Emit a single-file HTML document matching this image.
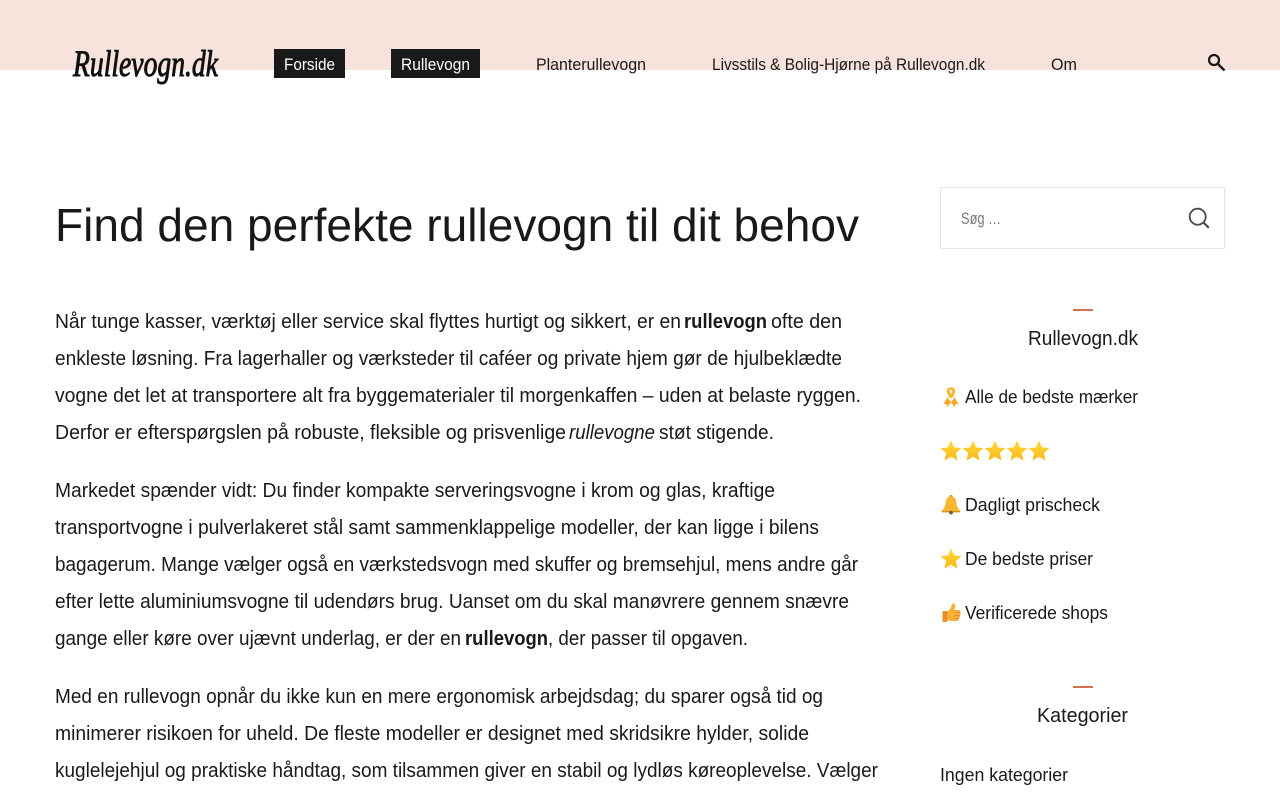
<!DOCTYPE html>
<html lang="da">
<head>
<meta charset="utf-8">
<title>Rullevogn.dk</title>
<style>
html,body{margin:0;padding:0;background:#fff;width:1280px;height:800px;overflow:hidden}
svg{display:block;position:absolute;left:0;top:0}
text{font-family:"Liberation Sans",Arial,sans-serif;fill:#191919;white-space:pre}
.b{font-size:20px}
.nav{font-size:16.5px}
.s{font-size:18px}
</style>
</head>
<body>
<svg width="1280" height="800" viewBox="0 0 1280 800" xmlns="http://www.w3.org/2000/svg">
<defs>
<linearGradient id="st" x1="0" y1="0" x2="0" y2="1"><stop offset="0" stop-color="#ffd93b"/><stop offset="1" stop-color="#fcb813"/></linearGradient>
<g id="star"><polygon points="10,-.5 13,6.4 20.5,7.1 14.8,12 16.5,19.5 10,15.6 3.5,19.5 5.2,12 -.5,7.1 7,6.4" fill="url(#st)"/></g>
</defs>

<rect x="0" y="0" width="1280" height="70" fill="#f7e3dc"/>

<!-- logo -->
<text x="73" y="76" font-size="37" font-style="italic" textLength="145" lengthAdjust="spacingAndGlyphs" stroke="#111" stroke-width="1" stroke-linejoin="round" style="fill:#111;font-family:'Liberation Serif',serif">Rullevogn.dk</text>

<!-- nav -->
<rect x="274" y="49" width="71" height="29" fill="#191919"/>
<rect x="391" y="49" width="89" height="29" fill="#191919"/>
<text class="nav" x="284" y="70" textLength="51" lengthAdjust="spacingAndGlyphs" style="fill:#fff">Forside</text>
<text class="nav" x="401" y="70" textLength="69" lengthAdjust="spacingAndGlyphs" style="fill:#fff">Rullevogn</text>
<text class="nav" x="536" y="70" textLength="110" lengthAdjust="spacingAndGlyphs">Planterullevogn</text>
<text class="nav" x="712" y="70" textLength="273" lengthAdjust="spacingAndGlyphs">Livsstils &amp; Bolig-Hjørne på Rullevogn.dk</text>
<text class="nav" x="1051" y="70" textLength="26" lengthAdjust="spacingAndGlyphs">Om</text>

<!-- header search icon -->
<circle cx="1214" cy="60" r="5" fill="none" stroke="#191919" stroke-width="2.2"/>
<path d="M1218 64L1224.5 70.5" stroke="#191919" stroke-width="2.4" fill="none"/>

<!-- heading -->
<text x="55" y="241" font-size="46" textLength="804" lengthAdjust="spacingAndGlyphs">Find den perfekte rullevogn til dit behov</text>

<!-- paragraph 1 -->
<text class="b" x="55" y="328" textLength="626" lengthAdjust="spacingAndGlyphs">Når tunge kasser, værktøj eller service skal flyttes hurtigt og sikkert, er en</text>
<text class="b" x="684" y="328" font-weight="700" textLength="83" lengthAdjust="spacingAndGlyphs">rullevogn</text>
<text class="b" x="771" y="328" textLength="71" lengthAdjust="spacingAndGlyphs">ofte den</text>
<text class="b" x="55" y="365" textLength="787" lengthAdjust="spacingAndGlyphs">enkleste løsning. Fra lagerhaller og værksteder til caféer og private hjem gør de hjulbeklædte</text>
<text class="b" x="55" y="402" textLength="806" lengthAdjust="spacingAndGlyphs">vogne det let at transportere alt fra byggematerialer til morgenkaffen – uden at belaste ryggen.</text>
<text class="b" x="55" y="439" textLength="511" lengthAdjust="spacingAndGlyphs">Derfor er efterspørgslen på robuste, fleksible og prisvenlige</text>
<text class="b" x="569" y="439" font-style="italic" textLength="86" lengthAdjust="spacingAndGlyphs">rullevogne</text>
<text class="b" x="659" y="439" textLength="115" lengthAdjust="spacingAndGlyphs">støt stigende.</text>

<!-- paragraph 2 -->
<text class="b" x="55" y="497" textLength="720" lengthAdjust="spacingAndGlyphs">Markedet spænder vidt: Du finder kompakte serveringsvogne i krom og glas, kraftige</text>
<text class="b" x="55" y="534" textLength="764" lengthAdjust="spacingAndGlyphs">transportvogne i pulverlakeret stål samt sammenklappelige modeller, der kan ligge i bilens</text>
<text class="b" x="55" y="571" textLength="803" lengthAdjust="spacingAndGlyphs">bagagerum. Mange vælger også en værkstedsvogn med skuffer og bremsehjul, mens andre går</text>
<text class="b" x="55" y="608" textLength="794" lengthAdjust="spacingAndGlyphs">efter lette aluminiumsvogne til udendørs brug. Uanset om du skal manøvrere gennem snævre</text>
<text class="b" x="55" y="645" textLength="406" lengthAdjust="spacingAndGlyphs">gange eller køre over ujævnt underlag, er der en</text>
<text class="b" x="465" y="645" font-weight="700" textLength="83" lengthAdjust="spacingAndGlyphs">rullevogn</text>
<text class="b" x="548" y="645" textLength="200" lengthAdjust="spacingAndGlyphs">, der passer til opgaven.</text>

<!-- paragraph 3 -->
<text class="b" x="55" y="703" textLength="768" lengthAdjust="spacingAndGlyphs">Med en rullevogn opnår du ikke kun en mere ergonomisk arbejdsdag; du sparer også tid og</text>
<text class="b" x="55" y="740" textLength="754" lengthAdjust="spacingAndGlyphs">minimerer risikoen for uheld. De fleste modeller er designet med skridsikre hylder, solide</text>
<text class="b" x="55" y="777" textLength="823" lengthAdjust="spacingAndGlyphs">kuglelejehjul og praktiske håndtag, som tilsammen giver en stabil og lydløs køreoplevelse. Vælger</text>

<!-- sidebar search -->
<rect x="940.5" y="187.5" width="284" height="61" fill="#fff" stroke="#e5e5e5"/>
<text x="961" y="224" font-size="17" style="fill:#777" textLength="40" lengthAdjust="spacingAndGlyphs">Søg …</text>
<circle cx="1197.7" cy="216.7" r="8" fill="none" stroke="#4a4a4a" stroke-width="1.8"/>
<path d="M1203.5 222.5L1208.8 227.8" stroke="#4a4a4a" stroke-width="2.2" fill="none"/>

<!-- widget 1 -->
<rect x="1073" y="309" width="20" height="2" fill="#d2704f"/>
<text x="1028" y="345" font-size="20" textLength="110" lengthAdjust="spacingAndGlyphs">Rullevogn.dk</text>

<!-- ribbon -->
<g transform="translate(941,387)">
<path d="M7 9.5L2.5 17 5.3 17 6.6 20 13.5 10.5M13 9.5L17.5 17 14.7 17 13.4 20 6.5 10.5" fill="#f9a825"/>
<path d="M10 .3C6.8 .3 5.5 2.8 5.9 5 6.3 7.2 7.8 9.2 10 11.2 12.2 9.2 13.7 7.2 14.1 5 14.5 2.8 13.2 .3 10 .3ZM10 2.8C11 2.8 11.5 3.6 11.3 4.6 11.1 5.4 10.6 6.2 10 6.9 9.4 6.2 8.9 5.4 8.7 4.6 8.5 3.6 9 2.8 10 2.8Z" fill="#fbb42c"/>
</g>
<text class="s" x="965" y="403" textLength="173" lengthAdjust="spacingAndGlyphs">Alle de bedste mærker</text>

<!-- five stars -->
<use href="#star" x="941" y="441"/>
<use href="#star" x="963" y="441"/>
<use href="#star" x="985" y="441"/>
<use href="#star" x="1007" y="441"/>
<use href="#star" x="1029" y="441"/>

<!-- bell -->
<g transform="translate(941,495)">
<circle cx="10" cy="1.8" r="1.8" fill="#d99a1c"/>
<path d="M10 1.5C6 1.5 4.8 4.5 4.5 8.5 4.2 12 2.5 14 .5 16 .2 16.6 .6 17 1.2 17H18.8C19.4 17 19.8 16.6 19.5 16 17.5 14 15.8 12 15.5 8.5 15.2 4.5 14 1.5 10 1.5Z" fill="#f7b733"/>
<path d="M1 16.2H19V17.4H1Z" fill="#c98a1a"/>
<circle cx="10" cy="17.6" r="1.9" fill="#7a5a22"/>
</g>
<text class="s" x="965" y="511" textLength="135" lengthAdjust="spacingAndGlyphs">Dagligt prischeck</text>

<!-- star -->
<use href="#star" x="941" y="549"/>
<text class="s" x="965" y="565" textLength="128" lengthAdjust="spacingAndGlyphs">De bedste priser</text>

<!-- thumb -->
<g transform="translate(942,603)">
<path d="M5.5 8.5C7.5 7 9 5 9.5 2.5 9.8 .8 11 -.2 12.2 .6 13.6 1.5 13.4 4.5 12.3 7H16.5C18.3 7 18.9 8.6 18.3 9.8 18.9 10.8 18.7 12 17.9 12.6 18.3 13.7 17.9 14.9 16.9 15.3 17.1 16.7 16.3 18 14.8 18H9.5C7.5 18 6.5 17.4 5.5 17Z" fill="#fbb03b"/>
<rect x="0.5" y="8" width="5" height="11" rx="1" fill="#e8912a"/>
<path d="M12 9.5H18M12 12.6H17.8M12 15.4H17" stroke="#d9852a" stroke-width=".8" fill="none"/>
</g>
<text class="s" x="965" y="619" textLength="143" lengthAdjust="spacingAndGlyphs">Verificerede shops</text>

<!-- widget 2 -->
<rect x="1073" y="686" width="20" height="2" fill="#d2704f"/>
<text x="1037" y="722" font-size="20" textLength="91" lengthAdjust="spacingAndGlyphs">Kategorier</text>
<text class="s" x="940" y="781" textLength="128" lengthAdjust="spacingAndGlyphs">Ingen kategorier</text>
</svg>
</body>
</html>
